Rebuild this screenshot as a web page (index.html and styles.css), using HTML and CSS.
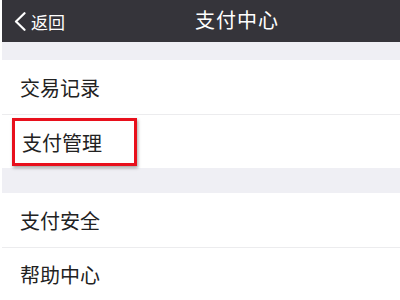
FILE: index.html
```html
<!DOCTYPE html>
<html lang="zh-CN">

<head>
    <meta charset="UTF-8">
    <meta name="viewport" content="width=device-width, initial-scale=1.0">
    <title>支付中心</title>
    <link rel="stylesheet" href="styles.css">
</head>

<body>
    <div class="page">
        <div class="topbar">
            <a class="back" href="#">
                <svg class="chevron" width="12" height="19" viewBox="0 0 12 19">
                    <path d="M10.5 1.2 L2 9.5 L10.5 17.8" fill="none" stroke="#fff" stroke-width="2.2" stroke-linecap="round" stroke-linejoin="round"/>
                </svg>
                <span>返回</span>
            </a>
            <div class="title">支付中心</div>
        </div>

        <div class="band"></div>
        <div class="group">
            <div class="row">交易记录</div>
            <div class="row row-marked"><span class="mark">支付管理</span></div>
        </div>

        <div class="band band-tall"></div>
        <div class="group">
            <div class="row">支付安全</div>
            <div class="row">帮助中心</div>
        </div>
    </div>
</body>

</html>
```

FILE: styles.css
```css
body {
    margin: 0;
    font-family: "Noto Sans CJK SC", "Noto Sans", sans-serif;
    background-color: #fff;
    color: #222;
    overflow: hidden;
}

.page {
    padding-left: 2px;
    background: #fff;
}

.topbar {
    height: 42px;
    background-color: #35343a;
    color: #fff;
    display: flex;
    align-items: center;
}

.back {
    display: flex;
    align-items: center;
    gap: 5px;
    padding-left: 12px;
    width: 181px;
    color: #fff;
    text-decoration: none;
    font-size: 17px;
    margin-top: 1px;
}

.title {
    font-size: 20px;
    letter-spacing: 1px;
    margin-top: -4px;
}

.band {
    height: 18px;
    background-color: #efeff4;
}

.band-tall {
    height: 25px;
}

.row {
    height: 54px;
    display: flex;
    align-items: center;
    padding-left: 18px;
    font-size: 20px;
    position: relative;
}

.row + .row {
    border-top: 1px solid #ececee;
    height: 53px;
}

.row-marked {
    padding-left: 10px;
    align-items: flex-start;
}

.mark {
    display: flex;
    align-items: center;
    box-sizing: border-box;
    width: 125px;
    height: 48px;
    margin-top: 3px;
    padding-left: 7px;
    border: 3px solid #e8101c;
    box-shadow: 1px 2px 3px rgba(0, 0, 0, 0.35);
}
```
